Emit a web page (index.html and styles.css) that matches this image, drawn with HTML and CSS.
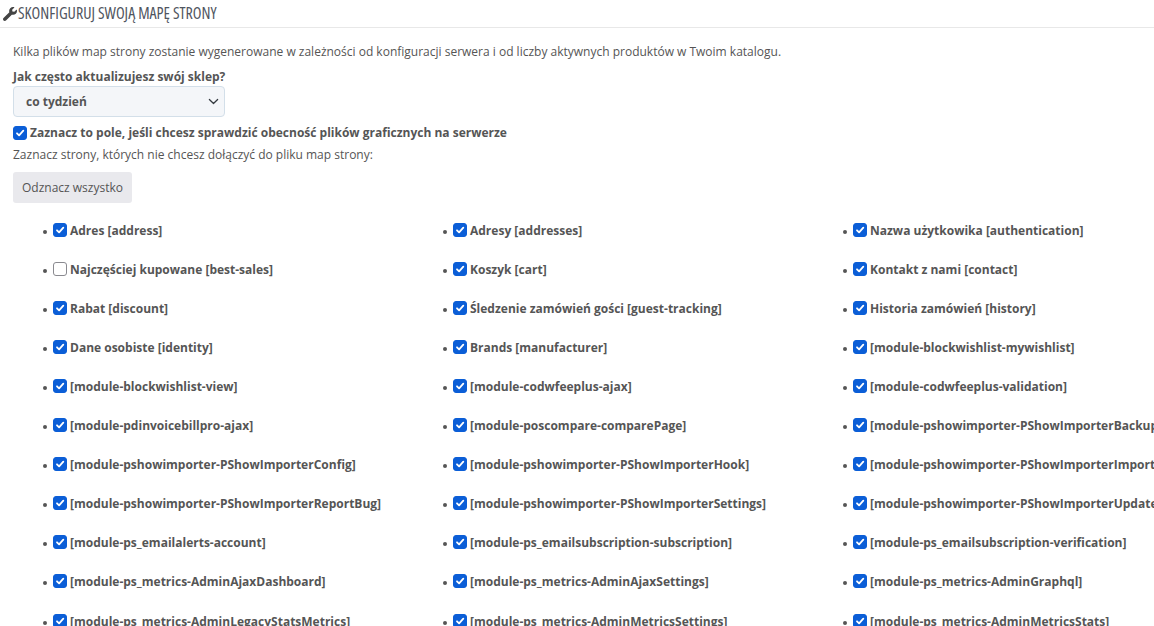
FILE: index.html
```html
<!DOCTYPE html>
<html lang="pl">
<head>
<meta charset="utf-8">
<title>Skonfiguruj swoją mapę strony</title>
<link rel="stylesheet" href="styles.css">
</head>
<body>
<header class="panel-head">
  <svg class="wrench" viewBox="0 0 512 512" width="14" height="14"><path d="M507.700 109.100c-2.200-9-13.500-12.100-20.100-5.500l-74.400 74.400-67.900-11.300-11.300-67.900 74.400-74.400c6.600-6.600 3.400-17.900-5.700-20.200-47.400-11.700-99.500.9-136.500 37.900-39.600 39.600-50.600 97.100-34 147.200L18.700 402.800c-25 25-25 65.500 0 90.500s65.500 25 90.500 0l213.200-213.200c50.100 16.700 107.500 5.700 147.300-34.100 37.100-37.100 49.700-89.300 38-136.900z" fill="#444"/></svg>
  <h2 class="panel-title">Skonfiguruj swoją mapę strony</h2>
</header>
<main class="panel-body">
  <p class="intro">Kilka plików map strony zostanie wygenerowane w zależności od konfiguracji serwera i od liczby aktywnych produktów w Twoim katalogu.</p>
  <label class="strong-label" for="freq">Jak często aktualizujesz swój sklep?</label>
  <div class="select" id="freq"><span>co tydzień</span>
    <svg viewBox="0 0 16 16" width="11" height="11"><path d="M2 5l6 6 6-6" fill="none" stroke="#343a40" stroke-width="1.800" stroke-linecap="round" stroke-linejoin="round"/></svg>
  </div>
  <label class="check-line"><input class="check" type="checkbox" checked> <span>Zaznacz to pole, jeśli chcesz sprawdzić obecność plików graficznych na serwerze</span></label>
  <p class="hint">Zaznacz strony, których nie chcesz dołączyć do pliku map strony:</p>
  <button class="btn" type="button">Odznacz wszystko</button>
  <ul class="pages">
    <li><input class="check" type="checkbox" checked> <span>Adres [address]</span></li>
    <li><input class="check" type="checkbox" checked> <span>Adresy [addresses]</span></li>
    <li><input class="check" type="checkbox" checked> <span>Nazwa użytkowika [authentication]</span></li>
    <li><input class="check" type="checkbox"> <span>Najczęściej kupowane [best-sales]</span></li>
    <li><input class="check" type="checkbox" checked> <span>Koszyk [cart]</span></li>
    <li><input class="check" type="checkbox" checked> <span>Kontakt z nami [contact]</span></li>
    <li><input class="check" type="checkbox" checked> <span>Rabat [discount]</span></li>
    <li><input class="check" type="checkbox" checked> <span>Śledzenie zamówień gości [guest-tracking]</span></li>
    <li><input class="check" type="checkbox" checked> <span>Historia zamówień [history]</span></li>
    <li><input class="check" type="checkbox" checked> <span>Dane osobiste [identity]</span></li>
    <li><input class="check" type="checkbox" checked> <span>Brands [manufacturer]</span></li>
    <li><input class="check" type="checkbox" checked> <span>[module-blockwishlist-mywishlist]</span></li>
    <li><input class="check" type="checkbox" checked> <span>[module-blockwishlist-view]</span></li>
    <li><input class="check" type="checkbox" checked> <span>[module-codwfeeplus-ajax]</span></li>
    <li><input class="check" type="checkbox" checked> <span>[module-codwfeeplus-validation]</span></li>
    <li><input class="check" type="checkbox" checked> <span>[module-pdinvoicebillpro-ajax]</span></li>
    <li><input class="check" type="checkbox" checked> <span>[module-poscompare-comparePage]</span></li>
    <li><input class="check" type="checkbox" checked> <span>[module-pshowimporter-PShowImporterBackup]</span></li>
    <li><input class="check" type="checkbox" checked> <span>[module-pshowimporter-PShowImporterConfig]</span></li>
    <li><input class="check" type="checkbox" checked> <span>[module-pshowimporter-PShowImporterHook]</span></li>
    <li><input class="check" type="checkbox" checked> <span>[module-pshowimporter-PShowImporterImport]</span></li>
    <li><input class="check" type="checkbox" checked> <span>[module-pshowimporter-PShowImporterReportBug]</span></li>
    <li><input class="check" type="checkbox" checked> <span>[module-pshowimporter-PShowImporterSettings]</span></li>
    <li><input class="check" type="checkbox" checked> <span>[module-pshowimporter-PShowImporterUpdate]</span></li>
    <li><input class="check" type="checkbox" checked> <span>[module-ps_emailalerts-account]</span></li>
    <li><input class="check" type="checkbox" checked> <span>[module-ps_emailsubscription-subscription]</span></li>
    <li><input class="check" type="checkbox" checked> <span>[module-ps_emailsubscription-verification]</span></li>
    <li><input class="check" type="checkbox" checked> <span>[module-ps_metrics-AdminAjaxDashboard]</span></li>
    <li><input class="check" type="checkbox" checked> <span>[module-ps_metrics-AdminAjaxSettings]</span></li>
    <li><input class="check" type="checkbox" checked> <span>[module-ps_metrics-AdminGraphql]</span></li>
    <li><input class="check" type="checkbox" checked> <span>[module-ps_metrics-AdminLegacyStatsMetrics]</span></li>
    <li><input class="check" type="checkbox" checked> <span>[module-ps_metrics-AdminMetricsSettings]</span></li>
    <li><input class="check" type="checkbox" checked> <span>[module-ps_metrics-AdminMetricsStats]</span></li>
  </ul>
</main>
</body>
</html>
```
FILE: styles.css
```css
html, body { margin: 0; height: 626px; overflow: hidden; background: #fff; }
body { font: 12px/18px "Open Sans", sans-serif; color: #555; }
.panel-head { display: flex; align-items: center; gap: 1px; height: 27px; padding-left: 3px; border-bottom: 1px solid #e8e8e8; }
.panel-title { margin: 0; font: 400 16px/25px "Open Sans", sans-serif; font-stretch: 75%; text-transform: uppercase; color: #505560; white-space: nowrap; }
.wrench { flex: none; }
.panel-body { padding: 15px 13px 0; }
.intro { margin: 0 0 1px; height: 18px; }
.strong-label { display: block; font-weight: 700; margin-top: 7px; height: 17px; line-height: 17px; }
.select { height: 29px; margin-top: 1px; display: flex; justify-content: space-between; align-items: center; padding: 0 5px 0 12px; background: #f4f6f9; border: 1px solid #d3dfe9; border-radius: 4px; font-weight: 700; width: 193px; }
.check-line { display: flex; align-items: center; gap: 3px; margin-top: 7px; font-weight: 700; height: 18px; }
.check-line .check { margin-top: -1px; }
.hint { margin: 4px 0 0; height: 18px; }
.btn { display: block; margin-top: 8px; width: 119px; height: 31px; padding: 0; border: 0; border-radius: 3px; background: #e9e9ed; color: #555; font: 12px "Open Sans", sans-serif; }
.pages { margin: 8.65px 0 0; padding: 0 0 0 30px; list-style: none; display: grid; grid-template-columns: repeat(3, 400px); grid-auto-rows: 39.1px; width: 1200px; font-weight: 700; }
.pages li { display: flex; gap: 3px; align-items: flex-start; white-space: nowrap; padding-top: 10px; box-sizing: border-box; line-height: 18px; }
.pages li::before { content: ""; flex: none; width: 4px; height: 4px; margin: 8px 3px 0 0; border-radius: 50%; background: #555; }
.check { appearance: none; margin: 0; width: 14px; height: 14px; flex: none; border: 1px solid #8a8a90; border-radius: 3px; background: #fff; display: inline-block; box-sizing: border-box; margin-top: 1px; }
.check:checked { border-color: #0b5ed7; background-color: #0b5ed7; background-image: url("data:image/svg+xml,%3Csvg xmlns='http://www.w3.org/2000/svg' viewBox='0 0 20 20'%3E%3Cpath fill='none' stroke='%23fff' stroke-linecap='round' stroke-linejoin='round' stroke-width='3' d='M5 10.500l3.500 3.500 7-8'/%3E%3C/svg%3E"); background-size: 100% 100%; }
```
